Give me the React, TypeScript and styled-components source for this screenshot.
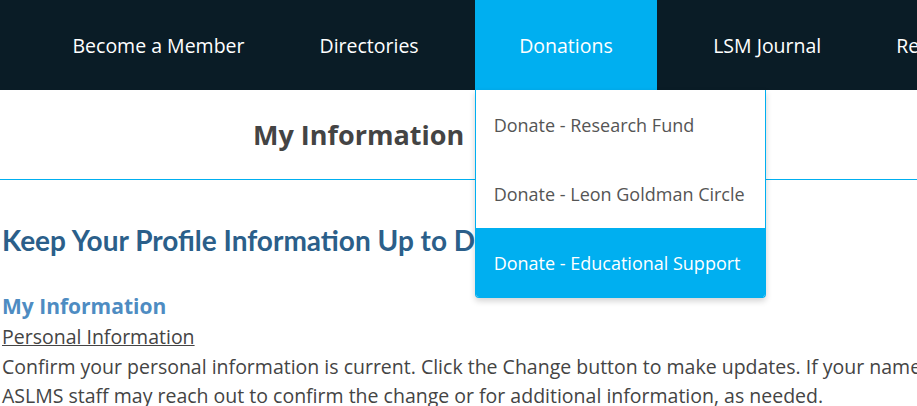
import { FC } from 'react';
import styled, { createGlobalStyle } from 'styled-components';

const GlobalStyle = createGlobalStyle`
  html, body {
    margin: 0;
    padding: 0;
    background: #fff;
    overflow: hidden;
  }
  body {
    font-family: 'Open Sans', 'Noto Sans', sans-serif;
    color: #444;
  }
`;

const Page = styled.div`
  width: 917px;
  height: 406px;
  overflow: hidden;
`;

const NavBar = styled.nav`
  position: relative;
  display: flex;
  height: 90px;
  padding-left: 35px;
  background: #0a1c26;
  white-space: nowrap;
`;

const NavItem = styled.div<{ $active?: boolean }>`
  position: relative;
  display: flex;
  align-items: center;
  padding: 0 ${p => (p.$active ? '44.5px' : '37.5px')};
  margin: 0 ${p => (p.$active ? '18.5px' : '0')};
  background: ${p => (p.$active ? '#00aff0' : 'transparent')};
  color: #fff;
  font-size: 19.5px;
  flex-shrink: 0;
`;

const Dropdown = styled.ul`
  position: absolute;
  top: 90px;
  left: 0;
  width: 289px;
  margin: 0;
  padding: 0;
  list-style: none;
  background: #fff;
  border: 1px solid #00aff0;
  border-top: none;
  border-radius: 0 0 4px 4px;
  box-shadow: 0 3px 6px rgba(0, 0, 0, 0.18);
  z-index: 10;
  overflow: hidden;
`;

const DropdownItem = styled.li<{ $active?: boolean }>`
  display: flex;
  align-items: center;
  height: 69px;
  padding: 0 18px;
  font-size: 18px;
  color: ${p => (p.$active ? '#fff' : '#555')};
  background: ${p => (p.$active ? '#00aff0' : '#fff')};
`;

const TitleBar = styled.header`
  display: flex;
  align-items: center;
  height: 89px;
  padding-left: 253px;
  border-bottom: 1px solid #00aff0;
`;

const PageTitle = styled.h1`
  margin: 0;
  font-size: 27px;
  font-weight: 700;
  color: #444;
`;

const Content = styled.main`
  padding: 0 2px;
`;

const Headline = styled.h2`
  margin: 43px 0 0;
  font-family: Lato, 'Open Sans', sans-serif;
  font-size: 28px;
  font-weight: 700;
  color: #2b5f8a;
  white-space: nowrap;
`;

const SectionTitle = styled.h3`
  margin: 34px 0 0;
  font-size: 21px;
  line-height: 30px;
  font-weight: 700;
  color: #4e8cc2;
`;

const SubTitle = styled.p`
  margin: 0;
  font-size: 19.5px;
  line-height: 31px;
  text-decoration: underline;
  color: #444;
`;

const Body = styled.p`
  margin: 0;
  font-size: 19.5px;
  line-height: 29px;
  color: #444;
  white-space: nowrap;
`;

const navItems = ['Become a Member', 'Directories', 'Donations', 'LSM Journal', 'Resources'];
const donateItems = [
  'Donate - Research Fund',
  'Donate - Leon Goldman Circle',
  'Donate - Educational Support',
];

const App: FC = () => (
  <Page>
    <GlobalStyle />
    <NavBar>
      {navItems.map(item =>
        item === 'Donations' ? (
          <NavItem key={item} $active>
            {item}
            <Dropdown>
              {donateItems.map((d, i) => (
                <DropdownItem key={d} $active={i === donateItems.length - 1}>
                  {d}
                </DropdownItem>
              ))}
            </Dropdown>
          </NavItem>
        ) : (
          <NavItem key={item}>{item}</NavItem>
        ),
      )}
    </NavBar>
    <TitleBar>
      <PageTitle>My Information</PageTitle>
    </TitleBar>
    <Content>
      <Headline>Keep Your Profile Information Up to Date</Headline>
      <SectionTitle>My Information</SectionTitle>
      <SubTitle>Personal Information</SubTitle>
      <Body>
        Confirm your personal information is current. Click the Change button to make updates. If your name
        has changed,
      </Body>
      <Body>ASLMS staff may reach out to confirm the change or for additional information, as needed.</Body>
    </Content>
  </Page>
);

export default App;
